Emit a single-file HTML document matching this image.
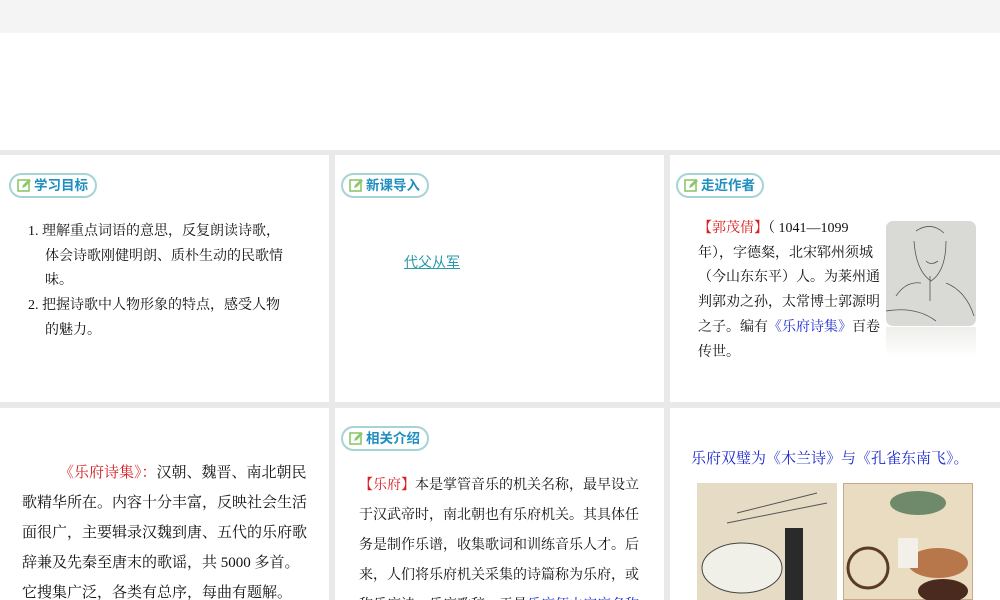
<!DOCTYPE html>
<html style="width:1000px;height:600px;overflow:hidden"><head><meta charset="utf-8"><style>
*{margin:0;padding:0;box-sizing:border-box}
body{width:1000px;height:600px;background:#e9e9e9;position:relative;overflow:hidden;font-family:"Liberation Serif","Noto Serif CJK SC",serif;color:#111}
.a{position:absolute}
.p{position:absolute;background:#fff;overflow:hidden}
.b{position:absolute;height:25px;white-space:nowrap;border:2px solid #a6d4d6;border-radius:13px;padding:0 7px 0 23px;font:bold 13.5px/21px "Liberation Sans","Noto Sans CJK SC",sans-serif;color:#1f8fc0}
.b svg{position:absolute;left:6px;top:3px}
.t{position:absolute;font-size:14px;white-space:nowrap}
.r{color:#d81e1e}.bl{color:#1e2ad0}
</style></head><body>
<div class="a" style="left:0;top:0;width:1000px;height:33px;background:#f4f4f4"></div>
<div class="a" style="left:0;top:33px;width:1000px;height:117px;background:#fff"></div>

<div class="p" style="left:0;top:155px;width:329px;height:247px"></div>
<div class="p" style="left:335px;top:155px;width:329px;height:247px"></div>
<div class="p" style="left:670px;top:155px;width:330px;height:247px"></div>
<div class="p" style="left:0;top:408px;width:329px;height:192px"></div>
<div class="p" style="left:335px;top:408px;width:329px;height:192px"></div>
<div class="p" style="left:670px;top:408px;width:330px;height:192px"></div>

<div class="b" style="left:9px;top:173px"><svg width="15" height="15" viewBox="0 0 15 15"><rect x="1" y="2" width="11" height="11" fill="none" stroke="#8cc86a" stroke-width="1.6"/><path d="M5 10 L6 7 L12 1 L14 3 L8 9 Z" fill="#8cc86a"/></svg>学习目标</div>
<div class="b" style="left:341px;top:173px"><svg width="15" height="15" viewBox="0 0 15 15"><rect x="1" y="2" width="11" height="11" fill="none" stroke="#8cc86a" stroke-width="1.6"/><path d="M5 10 L6 7 L12 1 L14 3 L8 9 Z" fill="#8cc86a"/></svg>新课导入</div>
<div class="b" style="left:676px;top:173px"><svg width="15" height="15" viewBox="0 0 15 15"><rect x="1" y="2" width="11" height="11" fill="none" stroke="#8cc86a" stroke-width="1.6"/><path d="M5 10 L6 7 L12 1 L14 3 L8 9 Z" fill="#8cc86a"/></svg>走近作者</div>
<div class="b" style="left:341px;top:426px"><svg width="15" height="15" viewBox="0 0 15 15"><rect x="1" y="2" width="11" height="11" fill="none" stroke="#8cc86a" stroke-width="1.6"/><path d="M5 10 L6 7 L12 1 L14 3 L8 9 Z" fill="#8cc86a"/></svg>相关介绍</div>

<div class="t" style="left:28px;top:220px;width:260px;line-height:24.7px;font-size:14px">
<div>1. 理解重点词语的意思，反复朗读诗歌，</div>
<div style="padding-left:17px">体会诗歌刚健明朗、质朴生动的民歌情</div>
<div style="padding-left:17px">味。</div>
<div>2. 把握诗歌中人物形象的特点，感受人物</div>
<div style="padding-left:17px">的魅力。</div>
</div>

<div class="t" style="left:404px;top:252px;font-family:'Liberation Sans','Noto Sans CJK SC',sans-serif;color:#2a9aa8;text-decoration:underline;font-size:14px">代父从军</div>

<div class="t" style="left:698px;top:217px;width:182px;line-height:24.7px;font-size:14px">
<div><span class="r">【郭茂倩】</span>（ 1041—1099</div>
<div>年），字德粲，北宋郓州须城</div>
<div>（今山东东平）人。为莱州通</div>
<div>判郭劝之孙，太常博士郭源明</div>
<div>之子。编有<span class="bl">《乐府诗集》</span>百卷</div>
<div>传世。</div>
</div>
<div class="a" style="left:886px;top:221px;width:90px;height:105px;border-radius:7px;background:#d9d9d6"></div>
<div class="a" style="left:886px;top:327px;width:90px;height:30px;background:linear-gradient(#eeeeec,#fff)"></div>
<svg class="a" style="left:886px;top:221px" width="90" height="105" viewBox="0 0 90 105" fill="none" stroke="#555" stroke-width="0.8"><path d="M30 10 Q45 0 58 12 M28 20 Q30 50 45 60 Q60 50 60 20 M40 40 Q45 45 52 40 M44 55 L44 80 M10 75 Q20 60 35 62 M60 62 Q80 70 88 95 M0 90 Q30 85 50 100"/></svg>

<div class="t" style="left:22px;top:458px;width:290px;line-height:30px;font-size:15px">
<div style="padding-left:37px"><span class="r">《乐府诗集》：</span>汉朝、魏晋、南北朝民</div>
<div>歌精华所在。内容十分丰富，反映社会生活</div>
<div>面很广，主要辑录汉魏到唐、五代的乐府歌</div>
<div>辞兼及先秦至唐末的歌谣，共 5000 多首。</div>
<div>它搜集广泛，各类有总序，每曲有题解。</div>
</div>

<div class="t" style="left:359px;top:471px;width:280px;line-height:30px;font-size:14px">
<div><span class="r">【乐府】</span>本是掌管音乐的机关名称，最早设立</div>
<div>于汉武帝时，南北朝也有乐府机关。其具体任</div>
<div>务是制作乐谱，收集歌词和训练音乐人才。后</div>
<div>来，人们将乐府机关采集的诗篇称为乐府，或</div>
<div>称乐府诗、乐府歌辞，于是<span class="bl">乐府便由官府名称</span></div>
</div>

<div class="t bl" style="left:691px;top:447px;font-size:15px">乐府双璧为《木兰诗》与《孔雀东南飞》。</div>
<div class="a" style="left:697px;top:483px;width:140px;height:117px;background:#e6dcc6"></div>
<svg class="a" style="left:697px;top:483px" width="140" height="117"><ellipse cx="45" cy="85" rx="40" ry="25" fill="#f0efe8" stroke="#444"/><rect x="88" y="45" width="18" height="72" fill="#2a2a2a"/><path d="M30 40 L130 20 M40 30 L120 10" stroke="#555"/></svg>
<div class="a" style="left:843px;top:483px;width:130px;height:117px;background:#eadcc0;border:1px solid #c9a78a"></div>
<svg class="a" style="left:843px;top:483px" width="130" height="117"><ellipse cx="75" cy="20" rx="28" ry="12" fill="#6e8a6a"/><circle cx="25" cy="85" r="20" fill="none" stroke="#5a3a2a" stroke-width="3"/><ellipse cx="95" cy="80" rx="30" ry="15" fill="#b7774a"/><ellipse cx="100" cy="108" rx="25" ry="12" fill="#4a2a1e"/><rect x="55" y="55" width="20" height="30" fill="#f3f0ea"/></svg>
</body></html>
